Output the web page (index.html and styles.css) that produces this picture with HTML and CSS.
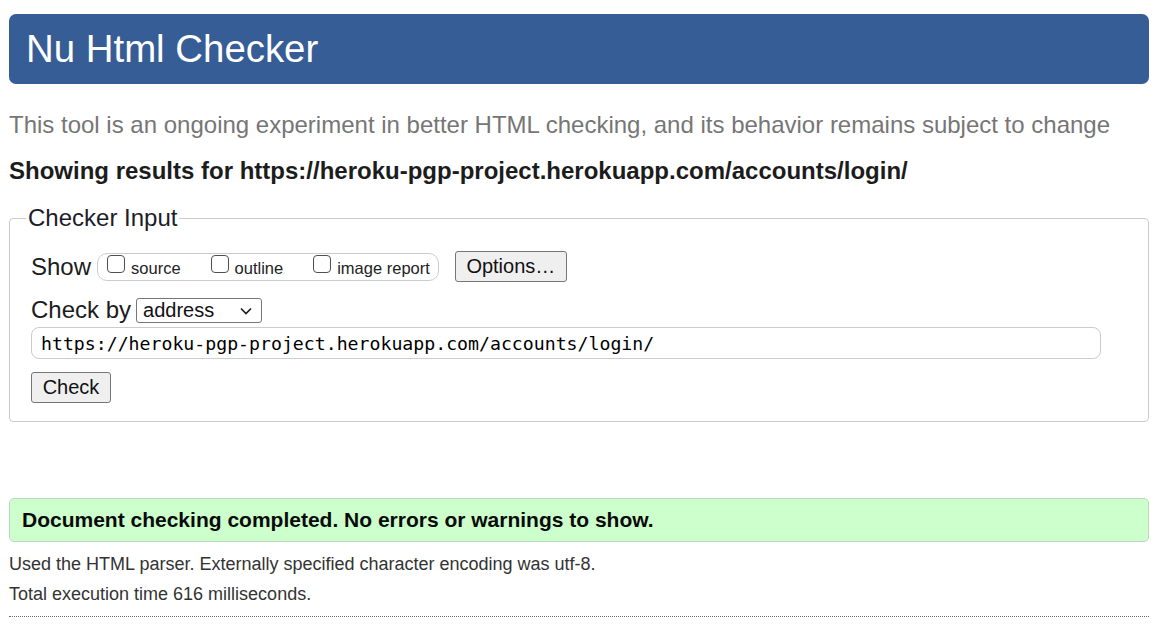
FILE: index.html
```html
<!DOCTYPE html>
<html lang="en">
<head>
<meta charset="utf-8">
<title>Nu Html Checker</title>
<link rel="stylesheet" href="styles.css">
</head>
<body>
<div class="page">
  <header class="banner">
    <h1 class="title">Nu Html Checker</h1>
  </header>
  <p class="tagline">This tool is an ongoing experiment in better HTML checking, and its behavior remains subject to change</p>
  <h2 class="results-for">Showing results for https://heroku-pgp-project.herokuapp.com/accounts/login/</h2>

  <fieldset class="checker">
    <legend class="checker-legend">Checker Input</legend>
    <div class="row row-show">
      <span class="row-label">Show</span>
      <div class="pill">
        <label class="opt"><input type="checkbox" class="cb"><span>source</span></label>
        <label class="opt"><input type="checkbox" class="cb"><span>outline</span></label>
        <label class="opt"><input type="checkbox" class="cb"><span>image report</span></label>
      </div>
      <button class="btn btn-options" type="button">Options…</button>
    </div>
    <div class="row row-by">
      <span class="row-label">Check by</span>
      <span class="select-wrap">
        <select class="select">
          <option>address</option>
          <option>file upload</option>
          <option>text input</option>
        </select>
        <svg class="chevron" width="12" height="8" viewBox="0 0 12 8" aria-hidden="true"><path d="M1 1.5 L6 6.5 L11 1.5" fill="none" stroke="#1a1a1a" stroke-width="1.6"/></svg>
      </span>
    </div>
    <input class="url" type="text" value="https://heroku-pgp-project.herokuapp.com/accounts/login/">
    <div class="row row-check">
      <button class="btn" type="button">Check</button>
    </div>
  </fieldset>

  <div class="success">Document checking completed. No errors or warnings to show.</div>
  <p class="meta meta-first">Used the HTML parser. Externally specified character encoding was utf-8.</p>
  <p class="meta">Total execution time 616 milliseconds.</p>
  <div class="rule"></div>
</div>
</body>
</html>
```

FILE: styles.css
```css
html, body {
  margin: 0;
  padding: 0;
  background: #ffffff;
}

body {
  font-family: "Liberation Sans", Arial, sans-serif;
  color: #222222;
}

.page {
  width: 1140px;
  padding: 14px 0 0 9px;
}

.banner {
  background: #365d95;
  border-radius: 7px;
  height: 70px;
  padding-left: 17px;
}

.title {
  margin: 0;
  font-size: 38.4px;
  line-height: 70px;
  font-weight: normal;
  color: #ffffff;
}

.tagline {
  margin: 27px 0 0;
  font-size: 24px;
  line-height: 28px;
  color: #767676;
}

.results-for {
  margin: 18px 0 0;
  font-size: 24px;
  line-height: 28px;
  font-weight: bold;
  color: #1c1c1c;
}

.checker {
  margin: 19px 0 0;
  padding: 19px 20px 18px 21px;
  border: 1px solid #cccccc;
  border-radius: 4px;
  min-width: 0;
}

.checker-legend {
  font-size: 24px;
  line-height: 28px;
  padding: 0 2px;
  margin-left: -5px;
  color: #1c1c2a;
}

.row {
  display: flex;
  align-items: center;
}

.row-show {
  height: 31px;
}

.row-label {
  font-size: 24px;
  line-height: 28px;
  color: #1c1c1c;
}

.pill {
  display: flex;
  align-items: center;
  box-sizing: border-box;
  height: 28px;
  margin-left: 6px;
  padding: 0 8px 0 9px;
  border: 1px solid #cccccc;
  border-radius: 10px;
  gap: 30px;
}

.opt {
  display: inline-flex;
  align-items: baseline;
  gap: 6px;
  font-size: 16.5px;
  color: #222222;
}

.cb {
  -webkit-appearance: none;
  appearance: none;
  box-sizing: border-box;
  width: 18px;
  height: 18px;
  margin: 0;
  border: 1px solid #505050;
  border-radius: 4px;
  background: #ffffff;
  position: relative;
  top: -1px;
}

.btn {
  font-family: "Liberation Sans", Arial, sans-serif;
  font-size: 20px;
  line-height: 23px;
  padding: 3px 10px;
  background: #efefef;
  border: 1px solid #767676;
  border-radius: 3px;
  color: #111111;
}

.btn-options {
  margin-left: 16px;
  width: 112px;
  height: 31px;
}

.row-by {
  margin-top: 14px;
  height: 28px;
}

.select-wrap {
  position: relative;
  display: inline-block;
  margin-left: 5px;
  height: 25px;
}

.select {
  -webkit-appearance: none;
  appearance: none;
  box-sizing: border-box;
  display: block;
  width: 126px;
  height: 25px;
  font-family: "Liberation Sans", Arial, sans-serif;
  font-size: 20px;
  line-height: 23px;
  border: 1px solid #767676;
  border-radius: 3px;
  background: #ffffff;
  color: #111111;
  padding: 0 0 0 6px;
}

.chevron {
  position: absolute;
  left: 104px;
  top: 9px;
  pointer-events: none;
}

.url {
  display: block;
  box-sizing: border-box;
  margin-top: 3px;
  width: 1070px;
  height: 32px;
  padding: 0 9px;
  border: 1px solid #cccccc;
  border-radius: 8px;
  font-family: "DejaVu Sans Mono", "Liberation Mono", monospace;
  font-size: 18.2px;
  color: #000000;
  background: #ffffff;
}

.row-check {
  margin-top: 13px;
}

.row-check .btn {
  width: 80px;
  height: 31px;
  padding: 0;
}

.success {
  margin-top: 76px;
  box-sizing: border-box;
  height: 44px;
  padding-left: 12px;
  background: #ccffcc;
  border: 1px solid #bcd8bc;
  border-radius: 5px;
  font-size: 21px;
  font-weight: bold;
  line-height: 42px;
  color: #0a0a0a;
}

.meta {
  margin: 8px 0 0;
  font-size: 18px;
  line-height: 22px;
  color: #333333;
}

.meta-first {
  margin-top: 11px;
}

.rule {
  margin-top: 11px;
  border-top: 1px dotted #666666;
}
```
